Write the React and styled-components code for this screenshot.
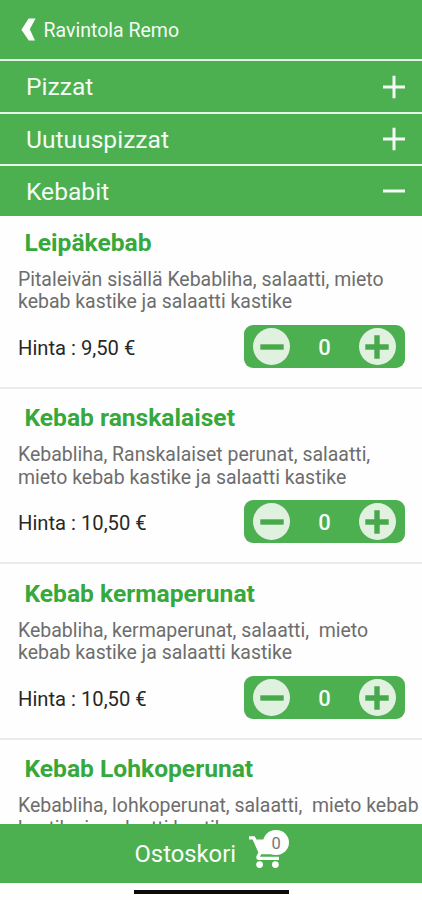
import React, { useState } from "react";
import styled, { createGlobalStyle } from "styled-components";

const GREEN = "#4caf50";

const GlobalStyle = createGlobalStyle`
  * { box-sizing: border-box; }
  body { margin: 0; background: #fefefe; font-family: Roboto, "Liberation Sans", sans-serif; }
  button { font: inherit; color: inherit; border: 0; padding: 0; margin: 0; background: none; cursor: pointer; }
`;

const Screen = styled.div`
  width: 422px;
  height: 900px;
  display: flex;
  flex-direction: column;
  overflow: hidden;
  background: #fefefe;
`;

const Header = styled.header`
  flex: none;
  height: 59.4px;
  display: flex;
  align-items: center;
  gap: 8px;
  padding: 0 0 0 21px;
  background: ${GREEN};
  color: #f4fbf4;
`;

const HeaderTitle = styled.h1`
  margin: 0 0 0 -0.5px;
  padding-top: 2px;
  font-size: 19.5px;
  font-weight: 400;
  line-height: 24px;
  white-space: nowrap;
`;

const Category = styled.button`
  flex: none;
  width: 100%;
  height: 52.3px;
  display: flex;
  align-items: center;
  justify-content: space-between;
  padding: 0 17px 0 26px;
  border-top: 2px solid #e6f5e6;
  background: ${GREEN};
  color: #f4fbf4;
`;

const CategoryName = styled.span`
  padding-top: 1.6px;
  font-size: 24.6px;
  line-height: 30px;
`;

const List = styled.main`
  flex: 1;
  min-height: 0;
  overflow: hidden;
`;

const Item = styled.article`
  height: 175.6px;
  padding: 13.4px 0 0 18px;
  border-bottom: 2px solid #ebebeb;

  &:first-child {
    height: 172.4px;
    padding-top: 10.4px;
  }
`;

const ItemTitle = styled.h2`
  margin: 0 0 0 6.5px;
  font-size: 24.6px;
  font-weight: 700;
  line-height: 32px;
  color: #36a83c;
  white-space: nowrap;
`;

const Description = styled.p`
  margin: 10px 0 0;
  font-size: 19.47px;
  line-height: 22.6px;
  color: #6d6d6d;
  white-space: pre;
`;

const OrderRow = styled.div`
  height: 43px;
  margin-top: 11.2px;
  padding-right: 17px;
  display: flex;
  align-items: center;
  justify-content: space-between;
`;

const Price = styled.span`
  font-size: 20.2px;
  line-height: 24px;
  padding-top: 3px;
  color: #282828;
`;

const Stepper = styled.div`
  width: 161px;
  height: 43px;
  padding: 0 9px;
  display: flex;
  align-items: center;
  justify-content: space-between;
  border-radius: 9px;
  background: ${GREEN};
`;

const StepButton = styled.button`
  width: 37px;
  height: 37px;
  display: flex;
  align-items: center;
  justify-content: center;
  border-radius: 50%;
  background: #e0f1e0;
`;

const Quantity = styled.span`
  font-size: 22px;
  font-weight: 500;
  line-height: 26px;
  padding-top: 2px;
  color: #f4fbf4;
`;

const CartBar = styled.button`
  flex: none;
  width: 100%;
  height: 59.5px;
  display: flex;
  align-items: center;
  padding: 0 0 0 134.5px;
  background: ${GREEN};
  color: #fafdfa;
`;

const CartLabel = styled.span`
  width: 113.2px;
  text-align: left;
  font-size: 23.8px;
  line-height: 30px;
  padding-top: 2px;
`;

const CartIconWrap = styled.span`
  position: relative;
  width: 38px;
  height: 38px;
  margin-bottom: 2px;
`;

const Badge = styled.span`
  position: absolute;
  left: 15.6px;
  top: -3.5px;
  width: 25.5px;
  height: 25.5px;
  border-radius: 50%;
  background: #fefefe;
  color: #777;
  font-size: 16.5px;
  line-height: 27px;
  text-align: center;
`;

const HomeArea = styled.div`
  flex: none;
  height: 17px;
  display: flex;
  justify-content: center;
  padding-top: 6.5px;
`;

const HomeIndicator = styled.div`
  width: 155px;
  height: 4px;
  background: #0b0b0b;
`;

const categories = [
  { name: "Pizzat", open: false },
  { name: "Uutuuspizzat", open: false },
  { name: "Kebabit", open: true },
];

const items = [
  { title: "Leipäkebab", text: "Pitaleivän sisällä Kebabliha, salaatti, mieto\nkebab kastike ja salaatti kastike", price: "9,50 €" },
  { title: "Kebab ranskalaiset", text: "Kebabliha, Ranskalaiset perunat, salaatti,\nmieto kebab kastike ja salaatti kastike", price: "10,50 €" },
  { title: "Kebab kermaperunat", text: "Kebabliha, kermaperunat, salaatti,  mieto\nkebab kastike ja salaatti kastike", price: "10,50 €" },
  { title: "Kebab Lohkoperunat", text: "Kebabliha, lohkoperunat, salaatti,  mieto kebab\nkastike ja salaatti kastike", price: "10,50 €" },
];

const BackIcon = () => (
  <svg width="15" height="23" viewBox="0 0 15 23" fill="#fafdfa">
    <path d="M7.6 0.4H14.6L8.8 11.2L14 22.6H7.8L0.4 11.8Z" />
  </svg>
);

const ToggleIcon = ({ open }) => (
  <svg width="22" height="24" viewBox="0 0 22 24" stroke="#f4fbf4" strokeWidth="3">
    <path d={open ? "M0 12H22" : "M0 12H22M11 0.7V23.3"} />
  </svg>
);

const StepIcon = ({ plus }) => (
  <svg width="24" height="24" viewBox="0 0 24 24" stroke="#48a94c" strokeWidth="5.4">
    <path d={plus ? "M0.3 12H23.7M12 0.3V23.7" : "M0.3 12H23.7"} />
  </svg>
);

const CartIcon = () => (
  <svg width="38" height="38" viewBox="0 0 38 38" fill="#fefefe">
    <path d="M1 3.2H6.8L8.4 6.6H30V17L27.6 20.2Q27 21.2 25.6 21.2H13.2L11.9 23.7H31V27H11Q7.6 26.6 8.4 23.2L10.4 19.4L4.6 6.6H1Z" />
    <circle cx="11.6" cy="31.6" r="3.4" />
    <circle cx="27.4" cy="31.6" r="3.4" />
  </svg>
);

function MenuItem({ title, text, price }) {
  const [count, setCount] = useState(0);
  return (
    <Item>
      <ItemTitle>{title}</ItemTitle>
      <Description>{text}</Description>
      <OrderRow>
        <Price>Hinta : {price}</Price>
        <Stepper>
          <StepButton aria-label="Vähennä" onClick={() => setCount(Math.max(0, count - 1))}><StepIcon /></StepButton>
          <Quantity>{count}</Quantity>
          <StepButton aria-label="Lisää" onClick={() => setCount(count + 1)}><StepIcon plus /></StepButton>
        </Stepper>
      </OrderRow>
    </Item>
  );
}

export default function App() {
  return (
    <Screen>
      <GlobalStyle />
      <Header>
        <BackIcon />
        <HeaderTitle>Ravintola Remo</HeaderTitle>
      </Header>
      {categories.map((c) => (
        <Category key={c.name}>
          <CategoryName>{c.name}</CategoryName>
          <ToggleIcon open={c.open} />
        </Category>
      ))}
      <List>
        {items.map((i) => <MenuItem key={i.title} {...i} />)}
      </List>
      <CartBar>
        <CartLabel>Ostoskori</CartLabel>
        <CartIconWrap>
          <CartIcon />
          <Badge>0</Badge>
        </CartIconWrap>
      </CartBar>
      <HomeArea><HomeIndicator /></HomeArea>
    </Screen>
  );
}
